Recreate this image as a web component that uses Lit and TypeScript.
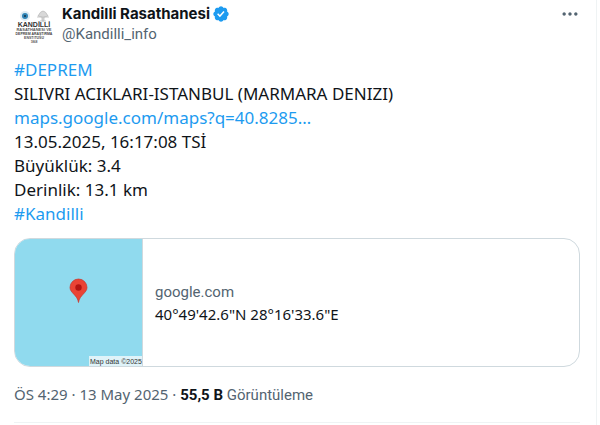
import { LitElement, html, css } from "lit";
import { customElement } from "lit/decorators.js";

@customElement("app-root")
export class AppRoot extends LitElement {
  static styles = css`
    :host {
      display: block;
      box-sizing: border-box;
      min-height: 100vh;
      margin-right: 3px;
      padding: 4px 16px 0 14px;
      border-right: 1px solid #eff3f4;
      background: #fff;
      color: #0f1419;
      font-family: "Noto Sans", "Liberation Sans", sans-serif;
      font-size: 15px;
      line-height: 20px;
    }
    a {
      color: #1d9bf0;
      text-decoration: none;
    }
    .head {
      display: flex;
      gap: 8px;
    }
    .avatar {
      width: 40px;
      height: 40px;
      flex: none;
    }
    .who {
      flex: 1;
      min-width: 0;
    }
    .name {
      display: flex;
      align-items: center;
      gap: 2px;
      color: #0f1419;
      font-family: Inter, sans-serif;
      font-weight: 700;
    }
    .badge {
      width: 18px;
      height: 18px;
    }
    .handle,
    .domain,
    .meta a {
      color: #536471;
    }
    .handle,
    .domain,
    .views {
      font-family: Roboto, sans-serif;
    }
    .handle {
      display: block;
    }
    .more {
      display: flex;
      width: 20px;
      height: 20px;
      padding: 0;
      border: 0;
      background: none;
      color: #536471;
    }
    .body {
      margin: 14px 0 12px;
      font-size: 17px;
      line-height: 24px;
      white-space: pre-line;
    }
    .card {
      display: flex;
      overflow: hidden;
      border: 1px solid #cfd9de;
      border-radius: 16px;
      color: #0f1419;
    }
    .map {
      display: flex;
      flex: none;
      width: 127px;
      height: 127px;
      border-right: 1px solid #cfd9de;
      background: #90daee;
    }
    .map svg {
      width: 100%;
      height: 100%;
    }
    .info {
      display: flex;
      flex-direction: column;
      justify-content: center;
      gap: 2px;
      padding: 0 12px;
    }
    .meta {
      margin-top: 17px;
      padding-bottom: 17px;
      border-bottom: 1px solid #eff3f4;
      color: #536471;
    }
    .meta strong {
      color: #0f1419;
    }
  `;

  render() {
    return html`
      <article>
        <header class="head">
          <svg class="avatar" viewBox="0 0 40 40" role="img" aria-label="Kandilli" font-family="Liberation Sans" font-weight="700" text-anchor="middle">
            <circle cx="11" cy="12" r="5" fill="#dcebf3" />
            <circle cx="11" cy="12" r="3" fill="#2f83b5" />
            <circle cx="11" cy="12" r="1" fill="#123047" />
            <path d="M24 12q5-10 10 0l-4 1v4h-2v-4zM23 13h12M26 17h6" fill="#d8d8d8" stroke="#bdbdbd" stroke-width=".8" />
            <text x="20" y="23" font-size="7" fill="#333">KANDİLLİ</text>
            <text x="20" y="27" font-size="4" fill="#555">RASATHANESİ VE</text>
            <text x="20" y="31" font-size="3.500" fill="#444">DEPREM ARAŞTIRMA</text>
            <text x="20" y="35" font-size="3.500" fill="#555">ENSTİTÜSÜ</text>
            <text x="20" y="39" font-size="3" fill="#555">1868</text>
          </svg>
          <div class="who">
            <a class="name" href="#profile">
              <span>Kandilli Rasathanesi</span>
              <svg class="badge" viewBox="0 0 22 22" role="img" aria-label="Onaylı hesap">
                <path fill="#1d9bf0" d="M20.396 11c-.018-.646-.215-1.275-.57-1.816-.354-.54-.852-.972-1.438-1.246.223-.607.27-1.264.14-1.897-.131-.634-.437-1.218-.882-1.687-.47-.445-1.053-.75-1.687-.882-.633-.13-1.29-.083-1.897.14-.273-.587-.704-1.086-1.245-1.44S11.647 1.62 11 1.604c-.646.017-1.273.213-1.813.568s-.969.854-1.24 1.44c-.608-.223-1.267-.272-1.902-.14-.635.13-1.22.436-1.69.882-.445.47-.749 1.055-.878 1.688-.13.633-.08 1.29.144 1.896-.587.274-1.087.705-1.443 1.245-.356.54-.555 1.17-.574 1.817.02.647.218 1.276.574 1.817.356.54.856.972 1.443 1.245-.224.606-.274 1.263-.144 1.896.13.634.433 1.218.877 1.688.47.443 1.054.747 1.687.878.633.132 1.29.084 1.897-.136.274.586.705 1.084 1.246 1.439.54.354 1.17.551 1.816.569.647-.016 1.276-.213 1.817-.567s.972-.854 1.245-1.44c.604.239 1.266.296 1.903.164.636-.132 1.22-.447 1.68-.907.46-.46.776-1.044.908-1.681s.075-1.299-.165-1.903c.586-.274 1.084-.705 1.439-1.246.354-.54.551-1.17.569-1.816zM9.662 14.85l-3.429-3.428 1.293-1.302 2.072 2.072 4.4-4.794 1.347 1.246z" />
              </svg>
            </a>
            <a class="handle" href="#profile">@Kandilli_info</a>
          </div>
          <button class="more" aria-label="Daha fazla">
            <svg viewBox="0 0 24 24" width="20" height="20" fill="currentColor">
              <path d="M3 12c0-1.100.9-2 2-2s2 .9 2 2-.9 2-2 2-2-.9-2-2zm9 2c1.100 0 2-.9 2-2s-.9-2-2-2-2 .9-2 2 .9 2 2 2zm7 0c1.100 0 2-.9 2-2s-.9-2-2-2-2 .9-2 2 .9 2 2 2z" />
            </svg>
          </button>
        </header>
        <div class="body"><a href="#deprem">#DEPREM</a>
SILIVRI ACIKLARI-ISTANBUL (MARMARA DENIZI)
<a href="#maps">maps.google.com/maps?q=40.8285…</a>
13.05.2025, 16:17:08 TSİ
Büyüklük: 3.4
Derinlik: 13.1 km
<a href="#kandilli">#Kandilli</a></div>
        <a class="card" href="#maps">
          <div class="map">
            <svg viewBox="0 0 127 127" role="img" aria-label="Harita">
              <path d="M63.500 63.500C62.500 56 55 54 55 48.500a8.500 8.500 0 0 1 17 0C72 54 64.500 56 63.500 63.500z" fill="#ea4335" stroke="#c5372c" stroke-width=".7" />
              <circle cx="63.500" cy="48.500" r="3.200" fill="#b31412" />
              <rect x="74" y="117" width="53" height="10" fill="#dff3f9" />
              <text x="75" y="125" font-family="Liberation Sans" font-size="7" fill="#333">Map data ©2025</text>
            </svg>
          </div>
          <div class="info">
            <span class="domain">google.com</span>
            <span>40°49'42.6"N 28°16'33.6"E</span>
          </div>
        </a>
        <footer class="meta"><a href="#status">ÖS 4:29 · 13 May 2025</a> · <span class="views"><strong>55,5 B</strong> Görüntüleme</span></footer>
      </article>
    `;
  }
}
